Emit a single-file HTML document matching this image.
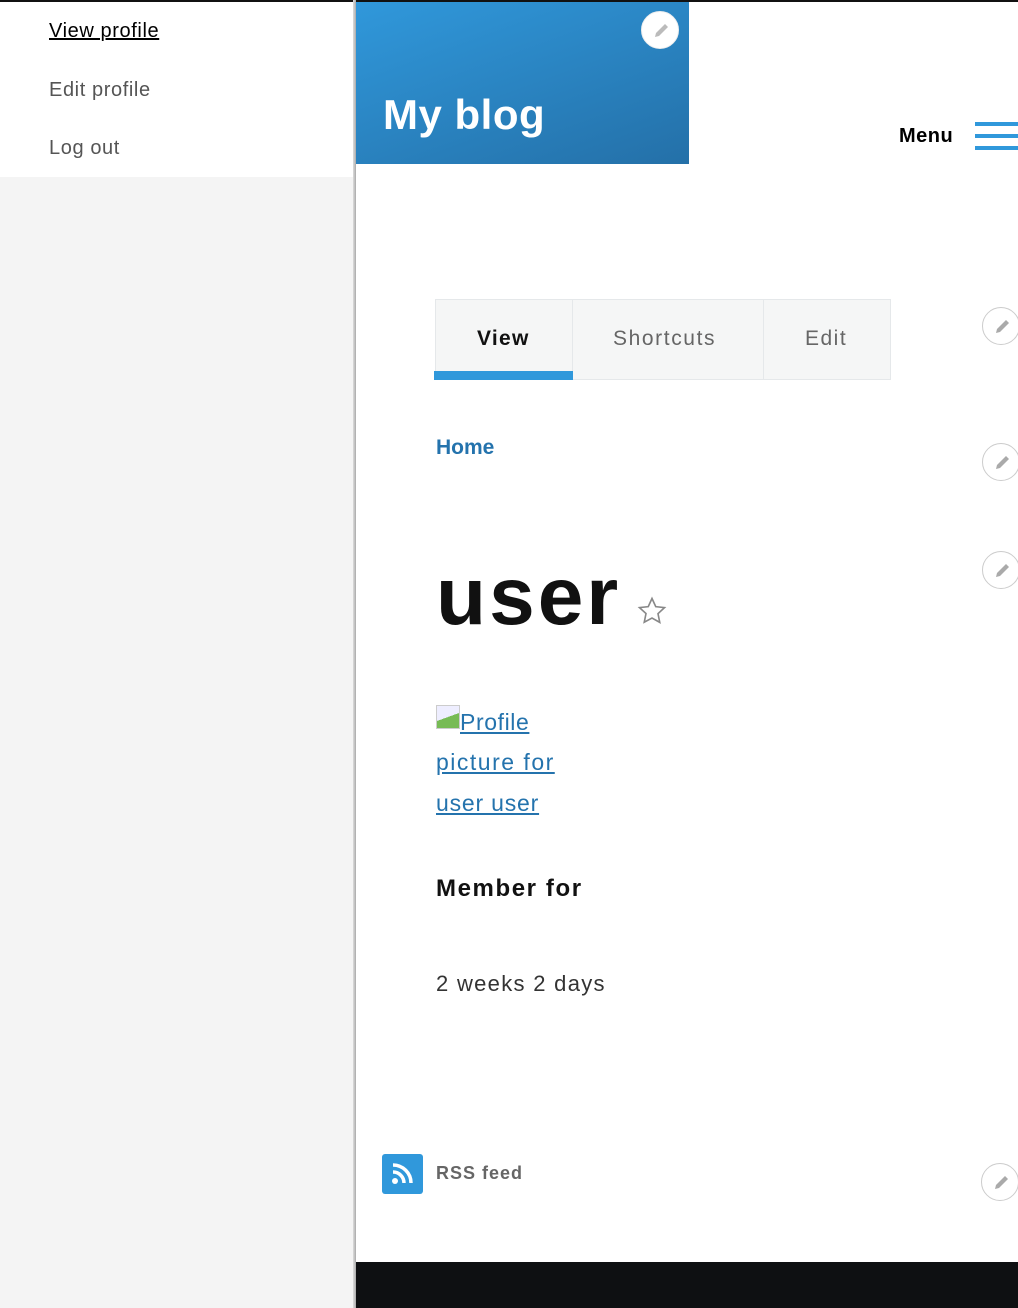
<!DOCTYPE html>
<html><head><style>
*{margin:0;padding:0;box-sizing:border-box}
body{width:1018px;height:1308px;position:relative;overflow:hidden;background:#fff;font-family:"Liberation Sans",sans-serif}
.a{position:absolute;white-space:nowrap}
.pen{position:absolute;width:38px;height:38px;border-radius:50%;border:1px solid #ccc;background:#fff}
.pen svg{position:absolute;left:9px;top:9px}
</style></head><body>
<div class="a" style="left:0;top:0;width:1018px;height:2px;background:#111"></div>
<div class="a" style="left:0;top:2px;width:354px;height:175px;background:#fff"></div>
<div class="a" style="left:0;top:177px;width:354px;height:1131px;background:#f4f4f4"></div>
<div class="a" style="left:353px;top:0;width:3px;height:1308px;background:linear-gradient(to right,#ddd,#aaa)"></div>
<div class="a" style="left:49px;top:20px;font-size:20px;color:#000;text-decoration:underline;letter-spacing:0.6px">View profile</div>
<div class="a" style="left:49px;top:79px;font-size:20px;color:#555;letter-spacing:0.6px">Edit profile</div>
<div class="a" style="left:49px;top:137px;font-size:20px;color:#555;letter-spacing:0.6px">Log out</div>

<div class="a" style="left:356px;top:2px;width:333px;height:162px;background:linear-gradient(160deg,#3098db,#2470a8)"></div>
<div class="a" style="left:383px;top:91px;font-size:42px;font-weight:bold;color:#fff;letter-spacing:0.5px">My blog</div>
<div class="pen" style="left:641px;top:11px;border-color:#eee"><svg width="20" height="20" viewBox="0 0 20 20"><path d="M4 16l1-4 9-9 3 3-9 9z" fill="#bbb"/></svg></div>

<div class="a" style="left:899px;top:125px;font-size:20px;font-weight:bold;color:#000;letter-spacing:0.5px">Menu</div>
<div class="a" style="left:975px;top:122px;width:43px;height:4px;background:#3098db"></div>
<div class="a" style="left:975px;top:134px;width:43px;height:4px;background:#3098db"></div>
<div class="a" style="left:975px;top:146px;width:43px;height:4px;background:#3098db"></div>

<div class="a" style="left:435px;top:299px;width:456px;height:81px;background:#f5f6f6;border:1px solid #e5e8ea"></div>
<div class="a" style="left:572px;top:300px;width:1px;height:79px;background:#e5e8ea"></div>
<div class="a" style="left:763px;top:300px;width:1px;height:79px;background:#e5e8ea"></div>
<div class="a" style="left:434px;top:371px;width:139px;height:9px;background:#3098db"></div>
<div class="a" style="left:477px;top:327px;font-size:21px;font-weight:bold;color:#111;letter-spacing:1.3px">View</div>
<div class="a" style="left:613px;top:327px;font-size:21px;color:#666;letter-spacing:1.6px">Shortcuts</div>
<div class="a" style="left:805px;top:327px;font-size:21px;color:#666;letter-spacing:1.5px">Edit</div>

<div class="a" style="left:436px;top:436px;font-size:21px;font-weight:bold;color:#2473ad">Home</div>
<div class="a" style="left:436px;top:550px;font-size:82px;font-weight:bold;color:#111;letter-spacing:3px">user</div>
<svg class="a" style="left:637px;top:596px" width="30" height="30" viewBox="0 0 24 24"><path d="M12 2l3 6.5 7 .8-5.2 4.8 1.4 7L12 17.6 5.8 21l1.4-7L2 9.3l7-.8z" fill="none" stroke="#888" stroke-width="1.3"/></svg>

<div class="a" style="left:436px;top:705px;width:24px;height:24px;border:1px solid #ccc;background:linear-gradient(160deg,#eef 50%,#7b5 50%)"></div>
<div class="a" style="left:460px;top:709px;font-size:23px;color:#2473ad;text-decoration:underline;letter-spacing:0.6px">Profile</div>
<div class="a" style="left:436px;top:749px;font-size:23px;color:#2473ad;text-decoration:underline;letter-spacing:1.5px">picture for</div>
<div class="a" style="left:436px;top:790px;font-size:23px;color:#2473ad;text-decoration:underline;letter-spacing:0.8px">user user</div>
<div class="a" style="left:436px;top:875px;font-size:24px;font-weight:bold;color:#111;letter-spacing:1.6px">Member for</div>
<div class="a" style="left:436px;top:971px;font-size:22px;color:#333;letter-spacing:1.3px">2 weeks 2 days</div>

<div class="a" style="left:382px;top:1154px;width:41px;height:40px;border-radius:3px;background:#3098db"></div>
<svg class="a" style="left:390px;top:1162px" width="24" height="24" viewBox="0 0 24 24"><circle cx="5" cy="19" r="3" fill="#fff"/><path d="M3 10a11 11 0 0 1 11 11M3 3a18 18 0 0 1 18 18" fill="none" stroke="#fff" stroke-width="3.5"/></svg>
<div class="a" style="left:436px;top:1163px;font-size:18px;font-weight:bold;color:#666;letter-spacing:1px">RSS feed</div>

<div class="pen" style="left:982px;top:307px"><svg width="20" height="20" viewBox="0 0 20 20"><path d="M4 16l1-4 9-9 3 3-9 9z" fill="#aaa"/></svg></div>
<div class="pen" style="left:982px;top:443px"><svg width="20" height="20" viewBox="0 0 20 20"><path d="M4 16l1-4 9-9 3 3-9 9z" fill="#aaa"/></svg></div>
<div class="pen" style="left:982px;top:551px"><svg width="20" height="20" viewBox="0 0 20 20"><path d="M4 16l1-4 9-9 3 3-9 9z" fill="#aaa"/></svg></div>
<div class="pen" style="left:981px;top:1163px"><svg width="20" height="20" viewBox="0 0 20 20"><path d="M4 16l1-4 9-9 3 3-9 9z" fill="#aaa"/></svg></div>

<div class="a" style="left:356px;top:1262px;width:662px;height:46px;background:#0e1012"></div>
</body></html>
